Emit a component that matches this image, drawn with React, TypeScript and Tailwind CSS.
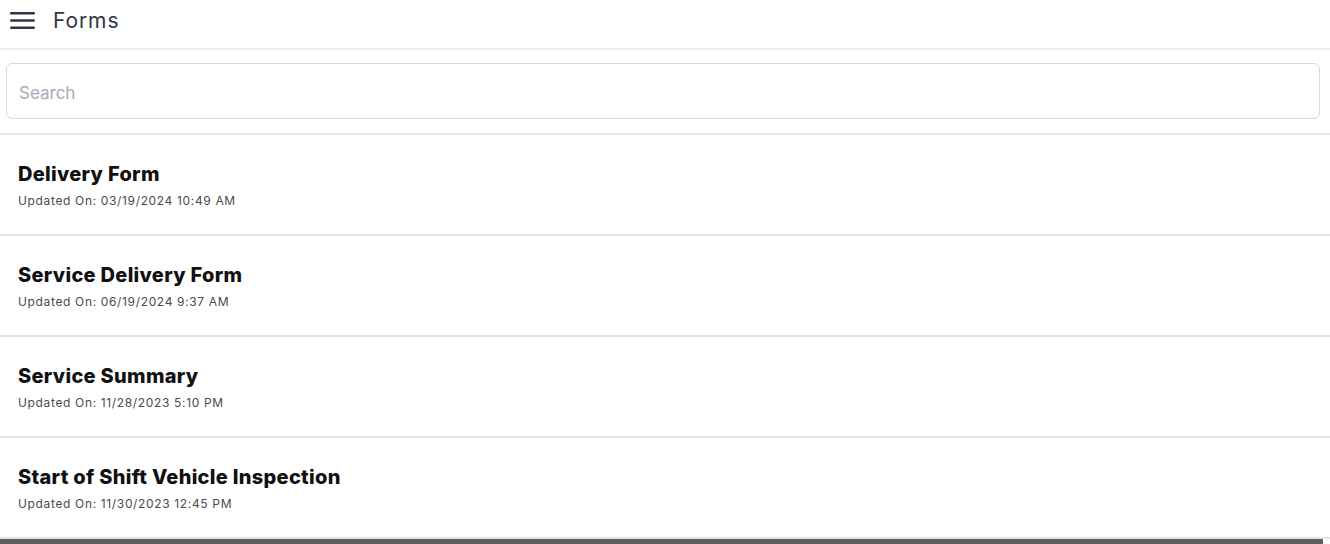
const forms = [
  { name: "Delivery Form", updated: "03/19/2024 10:49 AM" },
  { name: "Service Delivery Form", updated: "06/19/2024 9:37 AM" },
  { name: "Service Summary", updated: "11/28/2023 5:10 PM" },
  { name: "Start of Shift Vehicle Inspection", updated: "11/30/2023 12:45 PM" },
];

function MenuIcon() {
  return (
    <svg width="25" height="17" viewBox="0 0 25 17" className="text-[#2f3642]">
      <rect x="0" y="0" width="25" height="2.6" rx="1.3" fill="currentColor" />
      <rect x="0" y="7.2" width="25" height="2.6" rx="1.3" fill="currentColor" />
      <rect x="0" y="14.4" width="25" height="2.6" rx="1.3" fill="currentColor" />
    </svg>
  );
}

export default function App() {
  return (
    <div className="h-[544px] w-[1330px] overflow-hidden bg-white font-['Inter',sans-serif]">
      <header className="flex h-[50px] items-center gap-[18px] border-b-2 border-[#efefef] pb-[7px] pl-[10px]">
        <MenuIcon />
        <h1 className="text-[21px] font-normal tracking-[0.9px] text-[#2f3642]">Forms</h1>
      </header>

      <div className="border-b-2 border-[#e6e6e6] px-[6px] pt-[13px] pb-[14px] pr-[10px]">
        <input
          type="text"
          placeholder="Search"
          className="h-[56px] w-full rounded-[6px] border border-[#d9d9d9] px-[12px] pt-[3px] text-[17px] text-[#333] outline-none placeholder:text-[#a3abbb]"
        />
      </div>

      <ul>
        {forms.map((form) => (
          <li key={form.name} className="flex h-[101px] flex-col border-b-2 border-[#e2e2e2] pl-[18px] pt-[26px]">
            <p className="text-[20px] leading-[26px] font-extrabold tracking-[0.3px] text-[#111]">{form.name}</p>
            <p className="mt-[7px] text-[12px] leading-[14px] tracking-[0.65px] text-[#4a4a4a]">Updated On: {form.updated}</p>
          </li>
        ))}
      </ul>
      <div className="h-[6px] w-[1323px] bg-[#5f5f5f]" />
    </div>
  );
}
